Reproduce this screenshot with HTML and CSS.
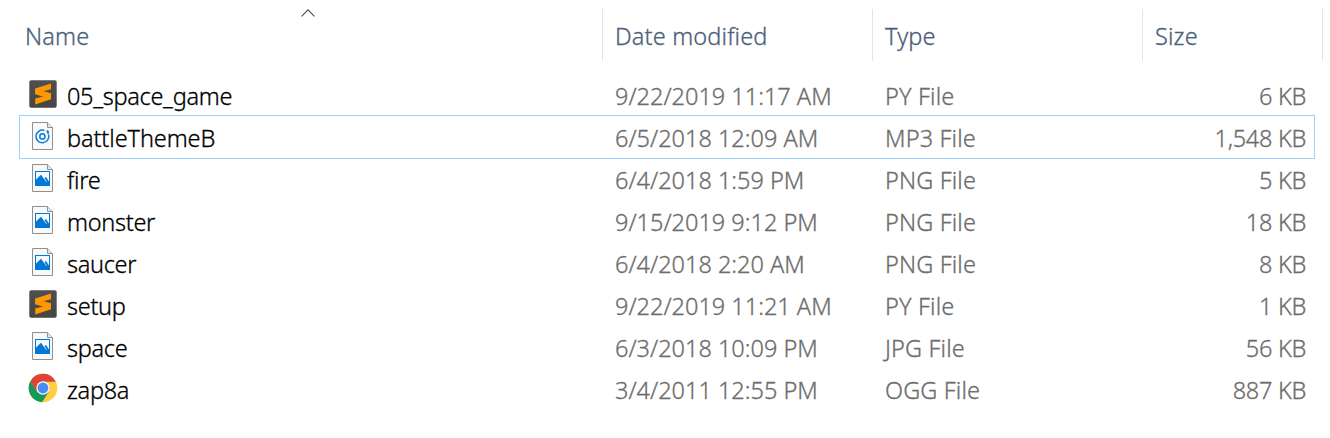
FILE: index.html
```
<!DOCTYPE html>
<html lang="en">
<head>
<meta charset="utf-8">
<title>Files</title>
<link rel="stylesheet" href="styles.css">
</head>
<body>
<svg class="defs" width="0" height="0">
  <defs>
    <linearGradient id="slate" x1="0" y1="0" x2="0" y2="1"><stop offset="0" stop-color="#4f4f4f"/><stop offset="1" stop-color="#464646"/></linearGradient>
    <symbol id="sublime" viewBox="0 0 28 28">
      <rect x=".3" y=".3" width="27.4" height="27.4" rx="1.8" fill="url(#slate)"/>
      <path d="M6.2 8.6V14.2L22 19.2V13.2z" fill="#e88700"/>
      <path d="M6.2 8.4 22 3.4V9.2L13.4 11.6 22 13.6V19.2L6.2 24.4V18.6L14.8 16.2 6.2 14z" fill="#ff9800"/>
    </symbol>
    <symbol id="page" viewBox="0 0 22 28">
      <path d="M.5 .5H15.5L20.5 5.5V27.5H.5z" fill="#f9f9f9" stroke="#909090"/>
      <path d="M15.5 .5V5.5H20.5" fill="#e6e6e6" stroke="#909090"/>
    </symbol>
    <symbol id="audio" viewBox="0 0 22 28">
      <use href="#page"/>
      <g fill="none" stroke="#0b7bdc" stroke-width="1.5">
        <path d="M12.4 8.3A6.4 6.4 0 1 0 16.5 12.4"/>
        <circle cx="10.4" cy="14.4" r="2.6"/>
      </g>
      <path d="M14.4 9.1 15.6 8 16.9 9.3 16.9 12.3 15.2 11.6z" fill="#0b7bdc"/>
    </symbol>
    <symbol id="image" viewBox="0 0 22 28">
      <use href="#page"/>
      <path d="M3 7H18V22H3z" fill="#0078d7"/>
      <path d="M4 8H17V17.5L13.8 12.8 12.6 14.4 15 17.8 14.2 17.8 9 10.8 4 15.6z" fill="#f7fbff"/>
    </symbol>
    <symbol id="chrome" viewBox="0 0 30 30">
      <circle cx="15" cy="15" r="14.3" fill="#ffcd40"/>
      <path d="M15 15 8.8 18.5 2.6 7.8A14.3 14.3 0 0 0 14 29.3L21 18.6z" fill="#159a5a"/>
      <path d="M2.6 7.9A14.3 14.3 0 0 1 27.9 8.8H15L8.7 18.4z" fill="#db4437"/>
      <circle cx="15" cy="15" r="6.7" fill="#f6f6f6"/>
      <circle cx="15" cy="15" r="5.4" fill="#4a8af4"/>
    </symbol>
  </defs>
</svg>
<main class="list">
  <header class="head">
    <div class="h name-h">Name<svg class="sort" width="14" height="8" viewBox="0 0 14 8"><path d="M.6 7.3 7 .9 13.4 7.3" fill="none" stroke="#4a4a4a" stroke-width="1.1"/></svg></div>
    <div class="h">Date modified</div>
    <div class="h">Type</div>
    <div class="h">Size</div>
  </header>
  <div class="row"><div class="name"><svg class="icon app"><use href="#sublime"/></svg><span>05_space_game</span></div><div class="date">9/22/2019 11:17 AM</div><div class="type">PY File</div><div class="size">6 KB</div></div>
  <div class="row selected"><div class="name"><svg class="icon doc"><use href="#audio"/></svg><span>battleThemeB</span></div><div class="date">6/5/2018 12:09 AM</div><div class="type">MP3 File</div><div class="size">1,548 KB</div></div>
  <div class="row"><div class="name"><svg class="icon doc"><use href="#image"/></svg><span>fire</span></div><div class="date">6/4/2018 1:59 PM</div><div class="type">PNG File</div><div class="size">5 KB</div></div>
  <div class="row"><div class="name"><svg class="icon doc"><use href="#image"/></svg><span>monster</span></div><div class="date">9/15/2019 9:12 PM</div><div class="type">PNG File</div><div class="size">18 KB</div></div>
  <div class="row"><div class="name"><svg class="icon doc"><use href="#image"/></svg><span>saucer</span></div><div class="date">6/4/2018 2:20 AM</div><div class="type">PNG File</div><div class="size">8 KB</div></div>
  <div class="row"><div class="name"><svg class="icon app"><use href="#sublime"/></svg><span>setup</span></div><div class="date">9/22/2019 11:21 AM</div><div class="type">PY File</div><div class="size">1 KB</div></div>
  <div class="row"><div class="name"><svg class="icon doc"><use href="#image"/></svg><span>space</span></div><div class="date">6/3/2018 10:09 PM</div><div class="type">JPG File</div><div class="size">56 KB</div></div>
  <div class="row"><div class="name"><svg class="icon round"><use href="#chrome"/></svg><span>zap8a</span></div><div class="date">3/4/2011 12:55 PM</div><div class="type">OGG File</div><div class="size">887 KB</div></div>
</main>
</body>
</html>
```
FILE: styles.css
```
* { box-sizing: border-box; }
body { margin: 0; background: #fff; font-family: "Noto Sans", "Open Sans", sans-serif; font-size: 23.5px; font-weight: 300; -webkit-text-stroke: .3px currentColor; }
.defs { display: block; height: 0; }
.list { padding: 9px 7px 0 20px; }
.head { display: grid; grid-template-columns: 583px 270px 270px 180px; height: 52px; margin-bottom: 13px; color: #4c607a; letter-spacing: .15px; }
.h { height: 52px; border-right: 1px solid #e5e5e5; padding-left: 12px; line-height: 54px; white-space: nowrap; }
.name-h { padding-left: 5px; position: relative; }
.sort { position: absolute; left: 281px; top: 0; }
.row { display: grid; grid-template-columns: 583px 270px 270px 163px; width: 1294px; height: 42px; line-height: 44px; color: #6d6d6d; white-space: nowrap; }
.selected { outline: 1px solid #99d1ff; }
.name { display: flex; color: #000; letter-spacing: -.3px; }
.selected .name { letter-spacing: -.1px; }
.name span { margin-left: 9px; }
.date, .type { padding-left: 12px; }
.type { letter-spacing: .15px; }
.size { text-align: right; letter-spacing: -.3px; }
.icon { flex: none; }
.app { width: 28px; height: 28px; margin: 6px 1px 0 9px; }
.doc { width: 22px; height: 28px; margin: 6px 4px 0 12px; }
.round { width: 30px; height: 30px; margin: 5px 0 0 8px; }
```
